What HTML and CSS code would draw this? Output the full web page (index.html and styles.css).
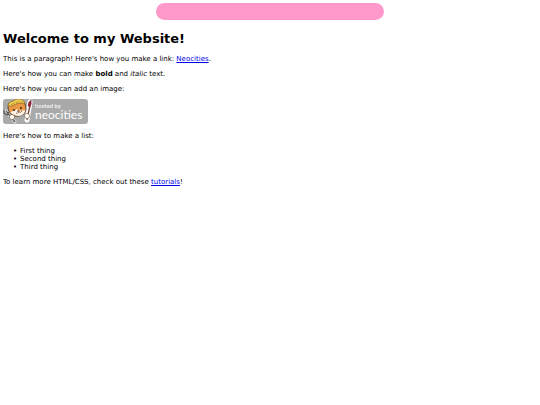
FILE: index.html
```html
<!DOCTYPE html>
<html lang="en">
  <head>
    <meta charset="UTF-8">
    <meta name="viewport" content="width=device-width, initial-scale=1.0">
    <title>My Website</title>
    <link rel="stylesheet" href="styles.css">
  </head>
  <body>
    <div class="banner"></div>

    <h1>Welcome to my Website!</h1>

    <p>This is a paragraph! Here's how you make a link: <a href="https://neocities.org">Neocities</a>.</p>

    <p>Here's how you can make <strong>bold</strong> and <em>italic</em> text.</p>

    <p>Here's how you can add an image:</p>
    <svg class="site-button" viewBox="0 0 85 25" role="img" aria-label="hosted by neocities">
      <rect width="85" height="25" rx="3" fill="#a9a9a9"/>
      <!-- fork -->
      <path d="M3 12l9 11" stroke="#ddd" stroke-width="3" stroke-linecap="round"/>
      <path d="M1 11l0 3 3 2 2-3M3 12l9 11" fill="none" stroke="#555" stroke-width="1.2"/>
      <!-- brush -->
      <path d="M27 3l-3 18" stroke="#fff" stroke-width="5" stroke-linecap="round"/>
      <path d="M27 6l-3 15" stroke="#754038" stroke-width="1.3"/>
      <path d="M25 7q0-4 3-6 1 4-1 7z" fill="#a51f32" stroke="#65313a" stroke-width=".5"/>
      <!-- cat -->
      <path d="M5 8l1-4 5-1 9-1 2 3 1 5q0 5-6 7-7 1-10-3-2-3-2-6z" fill="#e99743" stroke="#4c3b2c" stroke-width=".8"/>
      <path d="M7 13l4-1 3-2 4 2 4-1q0 4-5 6-6 0-10-4z" fill="#fff6e8"/>
      <path d="M5 7q0-4 5-5 4-3 8-2 3 1 4 5-5-2-9 0-4 3-8 2z" fill="#efcf52" stroke="#8b6424" stroke-width=".7"/>
      <path d="M8 6l4-3M13 4l3-2M17 4l2-2" stroke="#a77828" stroke-width=".7"/>
      <circle cx="11" cy="11" r="1" fill="#38302d"/>
      <circle cx="18" cy="9" r="1" fill="#38302d"/>
      <path d="M14 12l2-1v2zM13 14q2 1 3-1 2 1 3-1" fill="none" stroke="#75452f" stroke-width=".7"/>
      <circle cx="9" cy="18" r="2.6" fill="#fffaf0" stroke="#665b50" stroke-width=".6"/>
      <circle cx="24" cy="17" r="2.6" fill="#fffaf0" stroke="#665b50" stroke-width=".6"/>
      <text class="hosted" x="32" y="9">hosted by</text>
      <text class="wordmark" x="32" y="20">neocities</text>
    </svg>

    <p>Here's how to make a list:</p>

    <ul>
      <li>First thing</li>
      <li>Second thing</li>
      <li>Third thing</li>
    </ul>

    <p>To learn more HTML/CSS, check out these <a href="https://neocities.org/tutorials">tutorials</a>!</p>
  </body>
</html>
```
FILE: styles.css
```css
body {
  margin: 3px;
  background: white;
  color: black;
  font-family: Verdana, "DejaVu Sans", sans-serif;
  font-size: 7px;
  line-height: 8px;
}

.banner {
  width: 42.2%;
  min-width: 228px;
  height: 17px;
  margin: 0 auto;
  border-radius: 9px;
  background: #ff99cc;
}

h1 {
  margin: 11px 0 8px;
  font-size: 13px;
  line-height: 16px;
}

p {
  margin: 7px 0;
}

a {
  color: #0000ee;
}

.site-button {
  display: block;
  width: 85px;
  height: 25px;
  margin: -1px 0 8px;
}

.hosted,
.wordmark {
  fill: white;
  font-family: Lato, "Open Sans", sans-serif;
}

.hosted {
  font-size: 6px;
}

.wordmark {
  font-size: 12px;
}

ul {
  margin: 7px 0;
  padding-left: 10px;
  list-style: none;
}

li::before {
  content: "•";
  display: inline-block;
  width: 7px;
}
```
